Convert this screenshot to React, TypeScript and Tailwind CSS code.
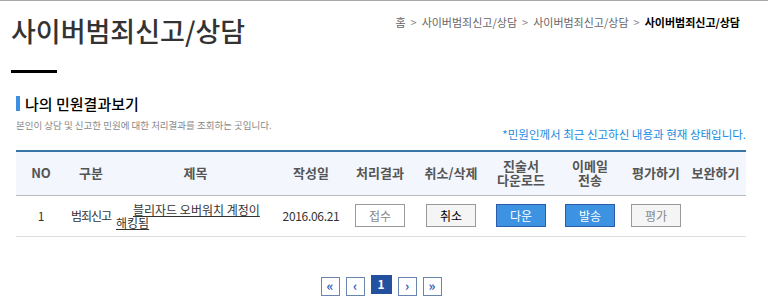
import React from "react";

const cols = [
  { key: "no", label: ["NO"], w: "w-[50px]" },
  { key: "type", label: ["구분"], w: "w-[50px]" },
  { key: "title", label: ["제목"], w: "w-[159px]" },
  { key: "date", label: ["작성일"], w: "w-[72px]" },
  { key: "result", label: ["처리결과"], w: "w-[66px]" },
  { key: "cancel", label: ["취소/삭제"], w: "w-[76px]" },
  { key: "down", label: ["진술서", "다운로드"], w: "w-[64px]" },
  { key: "mail", label: ["이메일", "전송"], w: "w-[74px]" },
  { key: "rate", label: ["평가하기"], w: "w-[58px]" },
  { key: "supp", label: ["보완하기"], w: "w-[61px]" },
];

function Btn({ children, kind }: { children: React.ReactNode; kind: "plain" | "gray" | "dark" | "blue" }) {
  const styles = {
    plain: "bg-white border-[#999] text-[#888]",
    gray: "bg-[#f5f5f5] border-[#999] text-[#888]",
    dark: "bg-[#f5f5f5] border-[#999] text-black",
    blue: "bg-[#3d93e2] border-[#2a5ca8] text-white",
  };
  return (
    <span
      className={`inline-flex h-[23px] w-[50px] items-center justify-center border text-[12px] leading-none ${styles[kind]}`}
    >
      {children}
    </span>
  );
}

function PageBox({ children, active }: { children: React.ReactNode; active?: boolean }) {
  if (active) {
    return (
      <span className="-mt-[2px] flex h-[19px] w-[21px] items-center justify-center bg-[#2450a0] text-[12px] font-bold leading-none text-white">
        {children}
      </span>
    );
  }
  return (
    <span className="flex h-[19px] w-[19px] items-center justify-center border border-[#6a85ad] bg-white pb-[1px] text-[13px] font-bold leading-none text-[#2a5cb8]">
      {children}
    </span>
  );
}

export default function App() {
  const crumbs = ["홈", "사이버범죄신고/상담", "사이버범죄신고/상담"];
  return (
    <div
      className="min-h-[302px] w-full border-t border-[#aaa] bg-white text-[#333]"
      style={{ fontFamily: '"Noto Sans CJK KR", "Noto Sans", sans-serif' }}
    >
      <div className="flex items-start justify-between pl-[11px] pr-[28px] pt-[16px]">
        <h1 className="text-[27px] font-medium leading-none text-[#333]">
          사이버범죄신고/상담
        </h1>
        <div className="flex items-center text-[11px] leading-none text-[#666]">
          {crumbs.map((c, i) => (
            <React.Fragment key={i}>
              <span>{c}</span>
              <span className="mx-[5px] text-[#888]">&gt;</span>
            </React.Fragment>
          ))}
          <span className="font-bold text-black">사이버범죄신고/상담</span>
        </div>
      </div>

      <div className="ml-[11px] mt-[26px] h-[3px] w-[46px] bg-black" />

      <div className="mx-[16px] mt-[23px] flex items-end justify-between pr-[6px]">
        <div>
          <div className="flex items-center gap-[5px]">
            <span className="h-[15px] w-[4px] bg-[#3d8fe0]" />
            <h2 className="text-[15px] font-medium leading-none text-black">나의 민원결과보기</h2>
          </div>
          <p className="mt-[10px] text-[9.5px] leading-none text-[#888]">
            본인이 상담 및 신고한 민원에 대한 처리결과를 조회하는 곳입니다.
          </p>
        </div>
        <p className="mb-[-10px] text-[11.5px] leading-none text-[#1a8ae0]">
          *민원인께서 최근 신고하신 내용과 현재 상태입니다.
        </p>
      </div>

      <div className="mx-[16px] mt-[19px] w-[730px] border-t-2 border-[#3a75a8]">
        <div className="flex h-[44px] border-b border-[#bbb] bg-[#f3f7fd]">
          {cols.map((c) => (
            <div
              key={c.key}
              className={`${c.w} flex flex-col items-center justify-center text-[13px] font-bold leading-[14px] text-[#555]`}
            >
              {c.label.map((l) => (
                <span key={l}>{l}</span>
              ))}
            </div>
          ))}
        </div>
        <div className="flex h-[41px] items-center border-b border-[#ddd] text-[12px] text-[#333]">
          <div className="w-[50px] text-center">1</div>
          <div className="w-[50px] whitespace-nowrap text-center tracking-[-1px]">범죄신고</div>
          <div className="w-[159px] break-keep indent-[17px] text-left leading-[13px] underline">
            블리자드 오버워치 계정이 해킹됨
          </div>
          <div className="w-[72px] text-center tracking-[-0.3px]">2016.06.21</div>
          <div className="flex w-[66px] justify-center">
            <Btn kind="plain">접수</Btn>
          </div>
          <div className="flex w-[76px] justify-center">
            <Btn kind="dark">취소</Btn>
          </div>
          <div className="flex w-[64px] justify-center">
            <Btn kind="blue">다운</Btn>
          </div>
          <div className="flex w-[74px] justify-center">
            <Btn kind="blue">발송</Btn>
          </div>
          <div className="flex w-[58px] justify-center">
            <Btn kind="gray">평가</Btn>
          </div>
          <div className="w-[61px]" />
        </div>
      </div>

      <div className="ml-[16px] mt-[40px] flex w-[730px] items-start justify-center gap-[6px]">
        <PageBox>«</PageBox>
        <PageBox>‹</PageBox>
        <PageBox active>1</PageBox>
        <PageBox>›</PageBox>
        <PageBox>»</PageBox>
      </div>
    </div>
  );
}
